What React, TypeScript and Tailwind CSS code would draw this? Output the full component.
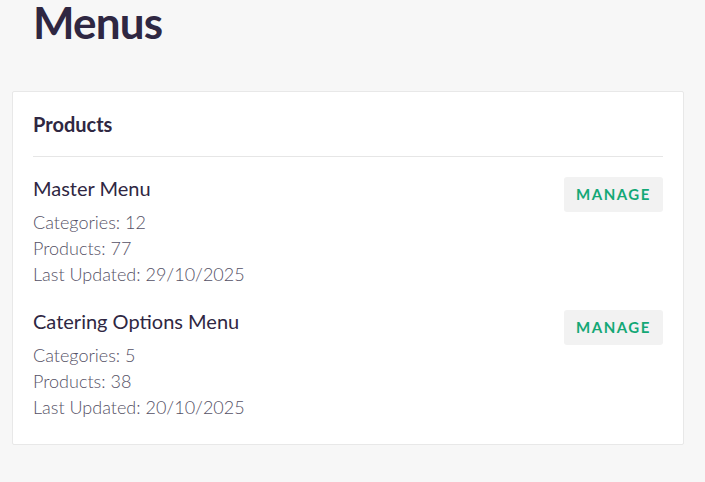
import React from 'react';

const menus = [
  { name: 'Master Menu', categories: 12, products: 77, updated: '29/10/2025' },
  { name: 'Catering Options Menu', categories: 5, products: 38, updated: '20/10/2025' },
];

const App = () => {
  return (
    <div className="min-h-screen w-full bg-[#f7f7f7] font-['Lato',sans-serif] text-[#2f2742]">
      <div className="px-[33px] h-[91px]">
        <h1 className="text-[44px] font-bold leading-[44px] tracking-[-0.8px] text-[#2f2742]">Menus</h1>
      </div>
      <div className="ml-3 w-[672px] bg-white border border-[#e8e8e8] rounded-[2px] px-5 pt-[20px] pb-[24px]">
        <h2 className="text-[20px] font-bold leading-6 pb-[20px] border-b border-[#e6e6e6]">Products</h2>
        <div className="flex flex-col gap-[22px] pt-[19px]">
          {menus.map((m) => (
            <div key={m.name} className="flex justify-between items-start">
              <div className="flex flex-col">
                <p className="text-[20px] leading-[24px] mb-[9px] text-[#2f2742]">{m.name}</p>
                <p className="text-[18px] font-light leading-[26px] text-[#555166]">Categories: {m.categories}</p>
                <p className="text-[18px] font-light leading-[26px] text-[#555166]">Products: {m.products}</p>
                <p className="text-[18px] font-light leading-[26px] text-[#555166]">Last Updated: {m.updated}</p>
              </div>
              <button className="mt-px w-[99px] h-[35px] bg-[#f2f2f2] rounded-[3px] text-[15px] font-bold tracking-[1.5px] text-[#14a876]">
                MANAGE
              </button>
            </div>
          ))}
        </div>
      </div>
    </div>
  );
};

export default App;
